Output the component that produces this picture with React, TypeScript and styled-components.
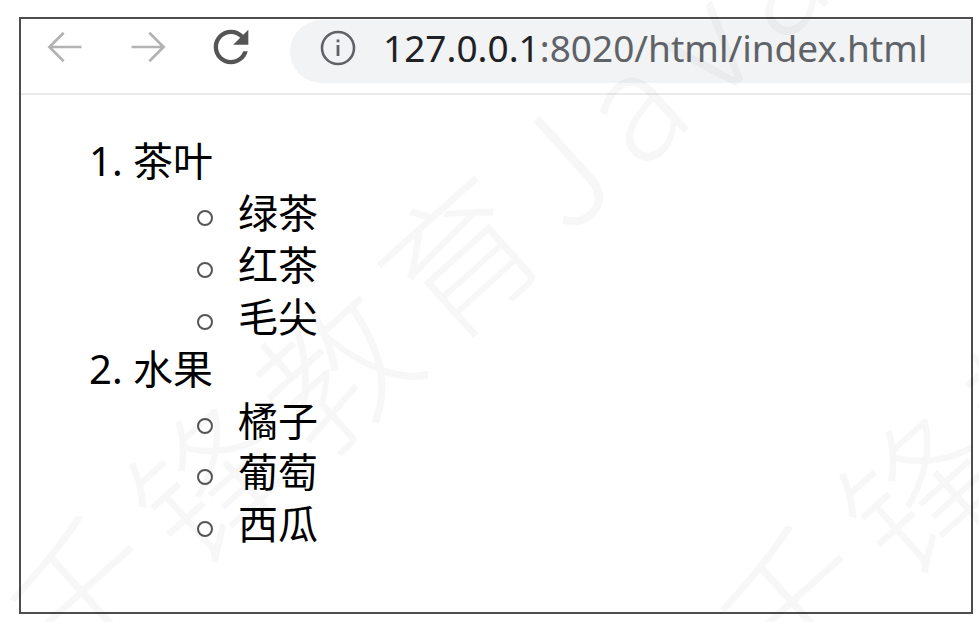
import React from 'react';
import styled, { createGlobalStyle } from 'styled-components';

const GlobalStyle = createGlobalStyle`
  html, body {
    margin: 0;
    padding: 0;
    background: #ffffff;
  }
  body {
    font-family: "Noto Sans", "Noto Sans CJK SC", sans-serif;
  }
`;

const Page = styled.div`
  position: relative;
  width: 979px;
  height: 622px;
  box-sizing: border-box;
  padding: 17px 0 0 19px;
  overflow: hidden;
  background: #ffffff;
`;

const Frame = styled.div`
  width: 954px;
  height: 597px;
  box-sizing: border-box;
  border: 2px solid #4d4d4d;
  display: flex;
  flex-direction: column;
  overflow: hidden;
`;

const Toolbar = styled.div`
  height: 74px;
  flex-shrink: 0;
  display: flex;
  align-items: flex-start;
  padding-left: 2px;
  border-bottom: 2px solid #ebebeb;
`;

const NavSlot = styled.div<{ $dim?: boolean }>`
  width: 83px;
  height: 52px;
  margin-top: 2px;
  display: flex;
  align-items: center;
  justify-content: center;
  color: ${(p) => (p.$dim ? '#b3b3b3' : '#555555')};
  svg {
    display: block;
  }
`;

const Omnibox = styled.div`
  flex: 1;
  height: 63px;
  margin: 1px 0 0 18px;
  box-sizing: border-box;
  padding: 8px 0 0 28px;
  display: flex;
  align-items: flex-start;
  background: #f1f3f4;
  border-radius: 32px 0 0 32px;
`;

const InfoIcon = styled.div`
  width: 40px;
  height: 40px;
  color: #5f6368;
  svg {
    display: block;
  }
`;

const Url = styled.div`
  margin-left: 25px;
  font-family: "Noto Sans", sans-serif;
  font-size: 37px;
  line-height: 40px;
  color: #5f6368;
  white-space: nowrap;
  span {
    color: #202124;
  }
`;

const Content = styled.div`
  flex: 1;
  font-family: "Noto Sans", "Noto Sans CJK SC", sans-serif;
  font-size: 40px;
  line-height: 51.9px;
  color: #000000;
`;

const OrderedList = styled.ol`
  margin: 40px 0 0;
  padding-left: 112px;
`;

const SubList = styled.ul`
  margin: 0;
  padding-left: 105px;
  list-style: none;
`;

const SubItem = styled.li`
  &::before {
    content: "";
    display: inline-block;
    box-sizing: border-box;
    width: 16px;
    height: 16px;
    margin: 0 25px 0 -41px;
    border: 2.5px solid #555555;
    border-radius: 50%;
    vertical-align: 2px;
  }
`;

const Watermark = styled.div<{ $x: number; $y: number }>`
  position: absolute;
  left: ${(p) => p.$x}px;
  top: ${(p) => p.$y}px;
  transform-origin: 0 0;
  transform: rotate(-42deg);
  font-family: "Noto Sans CJK SC", sans-serif;
  font-weight: 300;
  font-size: 150px;
  line-height: 150px;
  letter-spacing: 18px;
  color: rgba(0, 0, 0, 0.03);
  white-space: nowrap;
  pointer-events: none;
  user-select: none;
`;

const BackIcon = () => (
  <svg width="52" height="52" viewBox="0 0 24 24" fill="none" stroke="currentColor" strokeWidth="1.25">
    <path d="M19.6 12H5.2M11.4 5.4 4.8 12l6.6 6.6" />
  </svg>
);

const ForwardIcon = () => (
  <svg width="52" height="52" viewBox="0 0 24 24" fill="none" stroke="currentColor" strokeWidth="1.25">
    <path d="M4.4 12h14.4M12.6 5.4l6.6 6.6-6.6 6.6" />
  </svg>
);

const ReloadIcon = () => (
  <svg width="52" height="52" viewBox="0 0 24 24" fill="currentColor">
    <path d="M17.65 6.35C16.2 4.9 14.21 4 12 4c-4.42 0-7.99 3.58-7.99 8s3.57 8 7.99 8c3.73 0 6.84-2.55 7.73-6h-2.08c-.82 2.33-3.04 4-5.65 4-3.31 0-6-2.69-6-6s2.69-6 6-6c1.66 0 3.14.69 4.22 1.78L13 11h7V4l-2.35 2.35z" />
  </svg>
);

const Info = () => (
  <svg width="40" height="40" viewBox="0 0 40 40" fill="none">
    <circle cx="20" cy="20" r="16" stroke="currentColor" strokeWidth="2.6" />
    <rect x="18.6" y="17" width="2.8" height="11" fill="currentColor" />
    <rect x="18.6" y="11.5" width="2.8" height="2.8" fill="currentColor" />
  </svg>
);

const groups = [
  { name: '茶叶', items: ['绿茶', '红茶', '毛尖'] },
  { name: '水果', items: ['橘子', '葡萄', '西瓜'] },
];

const marks = [
  { x: -26, y: 584 },
  { x: 684, y: 594 },
];

export default function App() {
  return (
    <Page>
      <GlobalStyle />
      <Frame>
        <Toolbar>
          <NavSlot $dim><BackIcon /></NavSlot>
          <NavSlot $dim><ForwardIcon /></NavSlot>
          <NavSlot><ReloadIcon /></NavSlot>
          <Omnibox>
            <InfoIcon><Info /></InfoIcon>
            <Url><span>127.0.0.1</span>:8020/html/index.html</Url>
          </Omnibox>
        </Toolbar>
        <Content>
          <OrderedList>
            {groups.map((g) => (
              <li key={g.name}>
                {g.name}
                <SubList>
                  {g.items.map((it) => (
                    <SubItem key={it}>{it}</SubItem>
                  ))}
                </SubList>
              </li>
            ))}
          </OrderedList>
        </Content>
      </Frame>
      {marks.map((m, i) => (
        <Watermark key={i} $x={m.x} $y={m.y}>千锋教育Java</Watermark>
      ))}
    </Page>
  );
}
